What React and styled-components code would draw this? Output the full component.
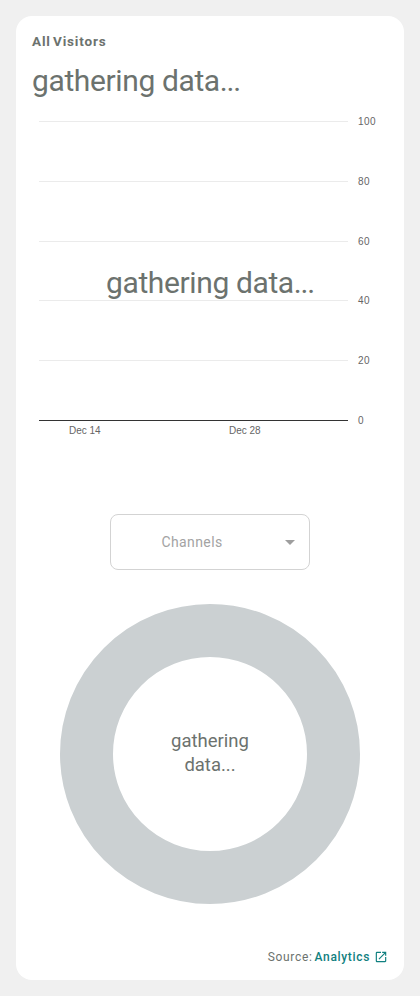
import React from 'react';
import styled, { createGlobalStyle } from 'styled-components';

const GlobalStyle = createGlobalStyle`
  * { box-sizing: border-box; }
  body { margin: 0; background: #f0f0f0; font-family: Roboto, sans-serif; }
`;

const Page = styled.main`
  height: 996px;
  padding: 16px;
  background: #f0f0f0;
`;

const Card = styled.section`
  display: flex;
  flex-direction: column;
  height: 964px;
  padding: 16px;
  border-radius: 16px;
  background: #fff;
  color: #6c726e;
`;

const Title = styled.h2`
  margin: 0;
  height: 20px;
  font-size: 13.5px;
  line-height: 19px;
  font-weight: 700;
  letter-spacing: 0.85px;
  word-spacing: -2px;
`;

const Metric = styled.div`
  margin-top: 9px;
  height: 40px;
  font-size: 30px;
  font-weight: 400;
  line-height: 40px;
  letter-spacing: -0.38px;
  white-space: nowrap;
`;

const Dots = styled.span`
  letter-spacing: -0.04em;
`;

const ChartBox = styled.div`
  position: relative;
  height: 397px;
  margin-top: 17px;
`;

const Chart = styled.svg`
  display: block;
  width: 356px;
  height: 350px;
  overflow: visible;
  font: 10px "Liberation Sans", sans-serif;
  fill: #666;
`;

const ChartOverlay = styled(Metric)`
  position: absolute;
  top: 145px;
  left: 0;
  width: 100%;
  margin: 0;
  text-align: center;
`;

const Select = styled.button`
  display: flex;
  align-items: center;
  align-self: center;
  width: 200px;
  height: 56px;
  margin-top: -1px;
  padding: 0 14px 0 16px;
  border: 1px solid #d3d3d3;
  border-radius: 8px;
  background: #fff;
  font: 400 14px/20px Roboto, sans-serif;
  letter-spacing: 0.4px;
`;

const SelectLabel = styled.span`
  flex: 1;
  padding-right: 28px;
  text-align: center;
  color: #a3a3a3;
`;

const Caret = styled.svg`
  width: 10px;
  height: 5px;
  fill: #9e9e9e;
`;

const Donut = styled.div`
  display: flex;
  align-items: center;
  justify-content: center;
  align-self: center;
  flex: none;
  width: 300px;
  height: 300px;
  margin-top: 34px;
  border: 53px solid #cbd0d2;
  border-radius: 50%;
`;

const DonutLabel = styled.span`
  width: 100px;
  padding-bottom: 2px;
  font-size: 18.5px;
  font-weight: 400;
  line-height: 24px;
  text-align: center;
`;

const Footer = styled.footer`
  display: flex;
  align-items: center;
  justify-content: flex-end;
  height: 20px;
  margin-top: auto;
  margin-bottom: -3px;
  font-size: 12px;
  line-height: 20px;
  letter-spacing: 0.67px;
  color: #6c726e;
`;

const SourceLink = styled.a`
  display: flex;
  align-items: center;
  gap: 4px;
  margin-left: 2px;
  color: #108080;
  font-weight: 500;
`;

const LinkIcon = styled.svg`
  width: 14px;
  height: 14px;
  fill: currentColor;
`;

const ticks = [
  [100, 4], [80, 64], [60, 124], [40, 183], [20, 243], [0, 303],
];

export default function App() {
  return (
    <>
      <GlobalStyle />
      <Page>
        <Card>
          <Title>All Visitors</Title>
          <Metric>gathering data<Dots>...</Dots></Metric>
          <ChartBox>
            <Chart viewBox="0 0 356 350">
              {ticks.map(([value, y]) => (
                <g key={value}>
                  <rect x="7" y={y - 1} width="309" height="1" fill={value ? '#ebebeb' : '#333'} />
                  <text x="326" y={y + 3} letterSpacing="0.5">{value}</text>
                </g>
              ))}
              <text x="37" y="316">Dec 14</text>
              <text x="197" y="316">Dec 28</text>
            </Chart>
            <ChartOverlay>gathering data<Dots>...</Dots></ChartOverlay>
          </ChartBox>
          <Select type="button">
            <SelectLabel>Channels</SelectLabel>
            <Caret viewBox="0 0 10 5"><path d="M0 0h10L5 5z" /></Caret>
          </Select>
          <Donut><DonutLabel>gathering data...</DonutLabel></Donut>
          <Footer>
            Source:
            <SourceLink>
              Analytics
              <LinkIcon viewBox="0 0 24 24">
                <path d="M19 19H5V5h7V3H5a2 2 0 0 0-2 2v14a2 2 0 0 0 2 2h14c1.1 0 2-.9 2-2v-7h-2v7zM14 3v2h3.59l-9.83 9.83 1.41 1.41L19 6.41V10h2V3h-7z" />
              </LinkIcon>
            </SourceLink>
          </Footer>
        </Card>
      </Page>
    </>
  );
}
